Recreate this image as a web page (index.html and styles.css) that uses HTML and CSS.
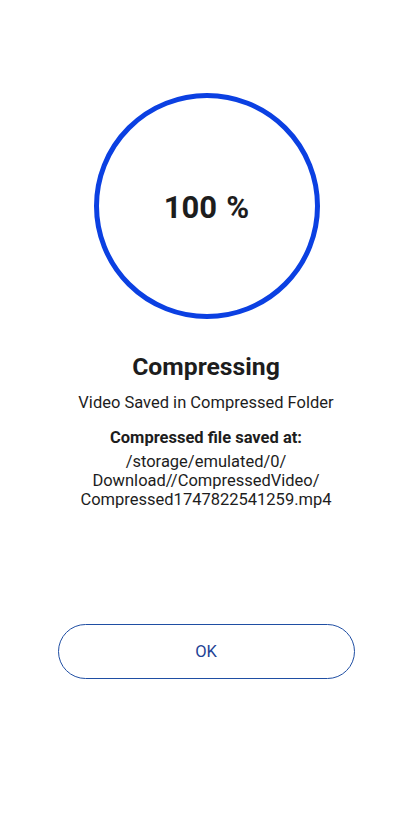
FILE: index.html
```html
<!DOCTYPE html>
<html lang="en">
<head>
<meta charset="utf-8">
<meta name="viewport" content="width=device-width, initial-scale=1">
<title>Compressing</title>
<link rel="stylesheet" href="styles.css">
</head>
<body>
<main class="screen">
  <div class="ring">
    <span class="percent">100 %</span>
  </div>
  <h1 class="title">Compressing</h1>
  <p class="status">Video Saved in Compressed Folder</p>
  <p class="label">Compressed file saved at:</p>
  <p class="path">/storage/emulated/0/<br>Download//CompressedVideo/<br>Compressed1747822541259.mp4</p>
  <button class="ok-btn" type="button">OK</button>
</main>
</body>
</html>
```

FILE: styles.css
```css
* {
  box-sizing: border-box;
}

html, body {
  margin: 0;
  padding: 0;
  background: #ffffff;
}

body {
  font-family: Roboto, "Noto Sans", "Liberation Sans", sans-serif;
  color: #1d1d1d;
}

.screen {
  width: 412px;
  min-height: 826px;
  display: flex;
  flex-direction: column;
  align-items: center;
}

.ring {
  margin-top: 93px;
  margin-left: 1px;
  width: 226px;
  height: 226px;
  padding-top: 3px;
  border: 5px solid #0b40e2;
  border-radius: 50%;
  display: flex;
  align-items: center;
  justify-content: center;
}

.percent {
  font-size: 31px;
  font-weight: 700;
  word-spacing: 1.5px;
  color: #1d1d1d;
}

.title {
  margin: 33px 0 0;
  font-size: 24.75px;
  font-weight: 700;
  line-height: 29px;
  color: #1d1d1d;
}

.status {
  margin: 11.5px 0 0;
  font-size: 16.5px;
  line-height: 19.3px;
  color: #1d1d1d;
}

.label {
  margin: 16.5px 0 0;
  font-size: 16.5px;
  font-weight: 700;
  line-height: 19.3px;
  color: #1d1d1d;
}

.path {
  margin: 4.25px 0 0;
  font-size: 16.5px;
  line-height: 19px;
  text-align: center;
  color: #1d1d1d;
}

.ok-btn {
  margin-top: 115px;
  width: 297px;
  height: 55px;
  border: 1.5px solid #1f4ea3;
  border-radius: 28px;
  background: #ffffff;
  font-family: Roboto, "Noto Sans", "Liberation Sans", sans-serif;
  font-size: 16.5px;
  color: #1f4396;
  cursor: pointer;
}
```
